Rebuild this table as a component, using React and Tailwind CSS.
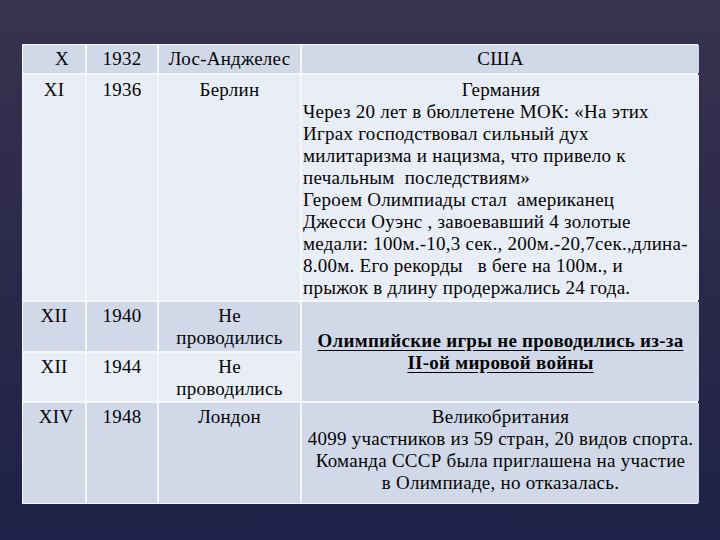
import React from "react";

const dark = "bg-[#d1d9e8]";
const light = "bg-[#e9edf5]";

function Cell({ children, className = "" }) {
  return <div className={`text-center ${className}`}>{children}</div>;
}

export default function App() {
  return (
    <div className="w-[720px] h-[540px] overflow-hidden relative bg-[linear-gradient(180deg,#38324f_0%,#2c2a4b_45%,#1f2148_100%)] text-[#050505] leading-[22px] text-[19px] tracking-[0.25px] font-['Liberation_Serif','DejaVu_Serif',serif]">
      <div className="pt-[44px] pl-[22px]">
        <div className="w-[676px] grid grid-cols-[62px_70px_141px_397px] grid-rows-[28px_225px_49px_48px_100px] gap-[2px] bg-[#f5f7fb] border border-[#f5f7fb]">
          {/* Row 1 */}
          <Cell className={`${dark} pt-[3px] pl-[16px]`}>X</Cell>
          <Cell className={`${dark} pt-[3px]`}>1932</Cell>
          <Cell className={`${dark} pt-[3px]`}>Лос-Анджелес</Cell>
          <Cell className={`${dark} pt-[3px]`}>США</Cell>
          {/* Row 2 */}
          <Cell className={`${light} pt-[4px]`}>XI</Cell>
          <Cell className={`${light} pt-[4px]`}>1936</Cell>
          <Cell className={`${light} pt-[4px]`}>Берлин</Cell>
          <div className={`${light} pt-[4px] pl-[1px] whitespace-nowrap`}>
            <div className="text-center">Германия</div>
            <div>
              Через 20 лет в бюллетене МОК: «На этих
              <br />
              Играх господствовал сильный дух
              <br />
              милитаризма и нацизма, что привело к
              <br />
              печальным&nbsp; последствиям»
              <br />
              Героем Олимпиады стал&nbsp; американец
              <br />
              Джесси Оуэнс , завоевавший 4 золотые
              <br />
              медали: 100м.-10,3 сек., 200м.-20,7сек.,длина-
              <br />
              8.00м. Его рекорды&nbsp;&nbsp; в беге на 100м., и
              <br />
              прыжок в длину продержались 24 года.
            </div>
          </div>
          {/* Row 3 */}
          <Cell className={`${dark} pt-[3px]`}>XII</Cell>
          <Cell className={`${dark} pt-[3px]`}>1940</Cell>
          <Cell className={`${dark} pt-[3px]`}>
            Не
            <br />
            проводились
          </Cell>
          <div
            className={`${dark} row-span-2 flex items-center justify-center text-center font-bold underline underline-offset-[3px]`}
          >
            <div>
              Олимпийские игры не проводились из-за
              <br />
              II-ой мировой войны
            </div>
          </div>
          {/* Row 4 */}
          <Cell className={`${light} pt-[3px]`}>XII</Cell>
          <Cell className={`${light} pt-[3px]`}>1944</Cell>
          <Cell className={`${light} pt-[3px]`}>
            Не
            <br />
            проводились
          </Cell>
          {/* Row 5 */}
          <Cell className={`${dark} pt-[3px] pl-[4px]`}>XIV</Cell>
          <Cell className={`${dark} pt-[3px]`}>1948</Cell>
          <Cell className={`${dark} pt-[3px]`}>Лондон</Cell>
          <Cell className={`${dark} pt-[3px] whitespace-nowrap`}>
            Великобритания
            <br />
            4099 участников из 59 стран, 20 видов спорта.
            <br />
            Команда СССР была приглашена на участие
            <br />в Олимпиаде, но отказалась.
          </Cell>
        </div>
      </div>
    </div>
  );
}
